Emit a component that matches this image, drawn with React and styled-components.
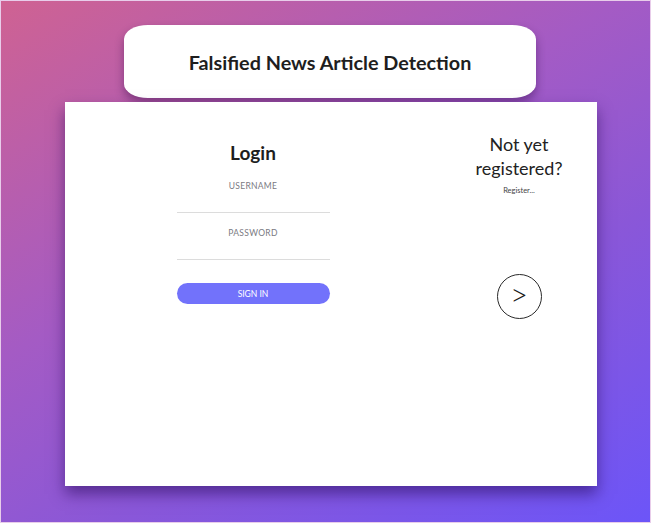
import styled, { createGlobalStyle } from 'styled-components';

const Global = createGlobalStyle`
  html, body { margin: 0; padding: 0; }
  body { font-family: Lato, "Open Sans", sans-serif; }
`;

const Page = styled.div`
  box-sizing: border-box;
  width: 651px;
  height: 523px;
  border: 1px solid #e8cdea;
  background: linear-gradient(150deg, #cf6292 0%, #a45bc4 40%, #8a57d8 65%, #6c55f8 100%);
  padding: 24px 0 0 64px;
  overflow: hidden;
`;

const Header = styled.div`
  box-sizing: border-box;
  width: 412px;
  height: 73px;
  margin-left: 59px;
  background: #fff;
  border-radius: 24px / 14px;
  box-shadow: 0 5px 10px rgba(40, 0, 60, 0.4);
  display: flex;
  align-items: center;
  justify-content: center;
`;

const Title = styled.h1`
  margin: 0;
  font-size: 19.8px;
  font-weight: 700;
  color: #1e1e1e;
`;

const Card = styled.div`
  box-sizing: border-box;
  width: 532px;
  height: 384px;
  margin-top: 4px;
  background: #fff;
  box-shadow: 0 8px 14px rgba(40, 10, 90, 0.55);
  display: grid;
  grid-template-columns: 376px 1fr;
`;

const LoginCol = styled.div`
  padding-top: 39px;
  display: flex;
  flex-direction: column;
  align-items: center;
`;

const Heading = styled.h2`
  margin: 0;
  font-size: 19px;
  line-height: 24px;
  font-weight: 700;
  color: #1e1e1e;
`;

const Field = styled.div`
  width: 153px;
  margin-top: ${p => p.$top}px;
  border-bottom: 1px solid #dcdcdc;
  display: flex;
  flex-direction: column;
  align-items: center;
`;

const Label = styled.label`
  font-size: 8.5px;
  line-height: 12px;
  color: #7a7a82;
  letter-spacing: 0.3px;
`;

const Input = styled.input`
  width: 100%;
  height: 20px;
  border: none;
  outline: none;
  background: transparent;
  padding: 0;
`;

const SignIn = styled.button`
  width: 153px;
  height: 21px;
  margin-top: 23px;
  border: none;
  border-radius: 11px;
  background: #7272fb;
  color: #fff;
  font-family: inherit;
  font-size: 8.5px;
  padding: 0;
`;

const RegisterCol = styled.div`
  padding-top: 30px;
  display: flex;
  flex-direction: column;
  align-items: center;
`;

const Prompt = styled.div`
  font-size: 18px;
  line-height: 24px;
  color: #222;
  text-align: center;
`;

const Small = styled.div`
  margin-top: 6px;
  font-size: 7.5px;
  color: #444;
`;

const Arrow = styled.button`
  box-sizing: border-box;
  width: 45px;
  height: 45px;
  margin-top: 79px;
  border: 1.3px solid #2a2a2a;
  border-radius: 50%;
  background: #fff;
  color: #1a1a1a;
  font-family: inherit;
  font-size: 31px;
  font-weight: 300;
  line-height: 1;
  padding: 0 0 4px;
  display: flex;
  align-items: center;
  justify-content: center;
`;

export default function App() {
  return (
    <>
      <Global />
      <Page>
        <Header>
          <Title>Falsified News Article Detection</Title>
        </Header>
        <Card>
          <LoginCol>
            <Heading>Login</Heading>
            <Field $top={15}>
              <Label>USERNAME</Label>
              <Input />
            </Field>
            <Field $top={14}>
              <Label>PASSWORD</Label>
              <Input type="password" />
            </Field>
            <SignIn>SIGN IN</SignIn>
          </LoginCol>
          <RegisterCol>
            <Prompt>Not yet<br />registered?</Prompt>
            <Small>Register...</Small>
            <Arrow>&gt;</Arrow>
          </RegisterCol>
        </Card>
      </Page>
    </>
  );
}
